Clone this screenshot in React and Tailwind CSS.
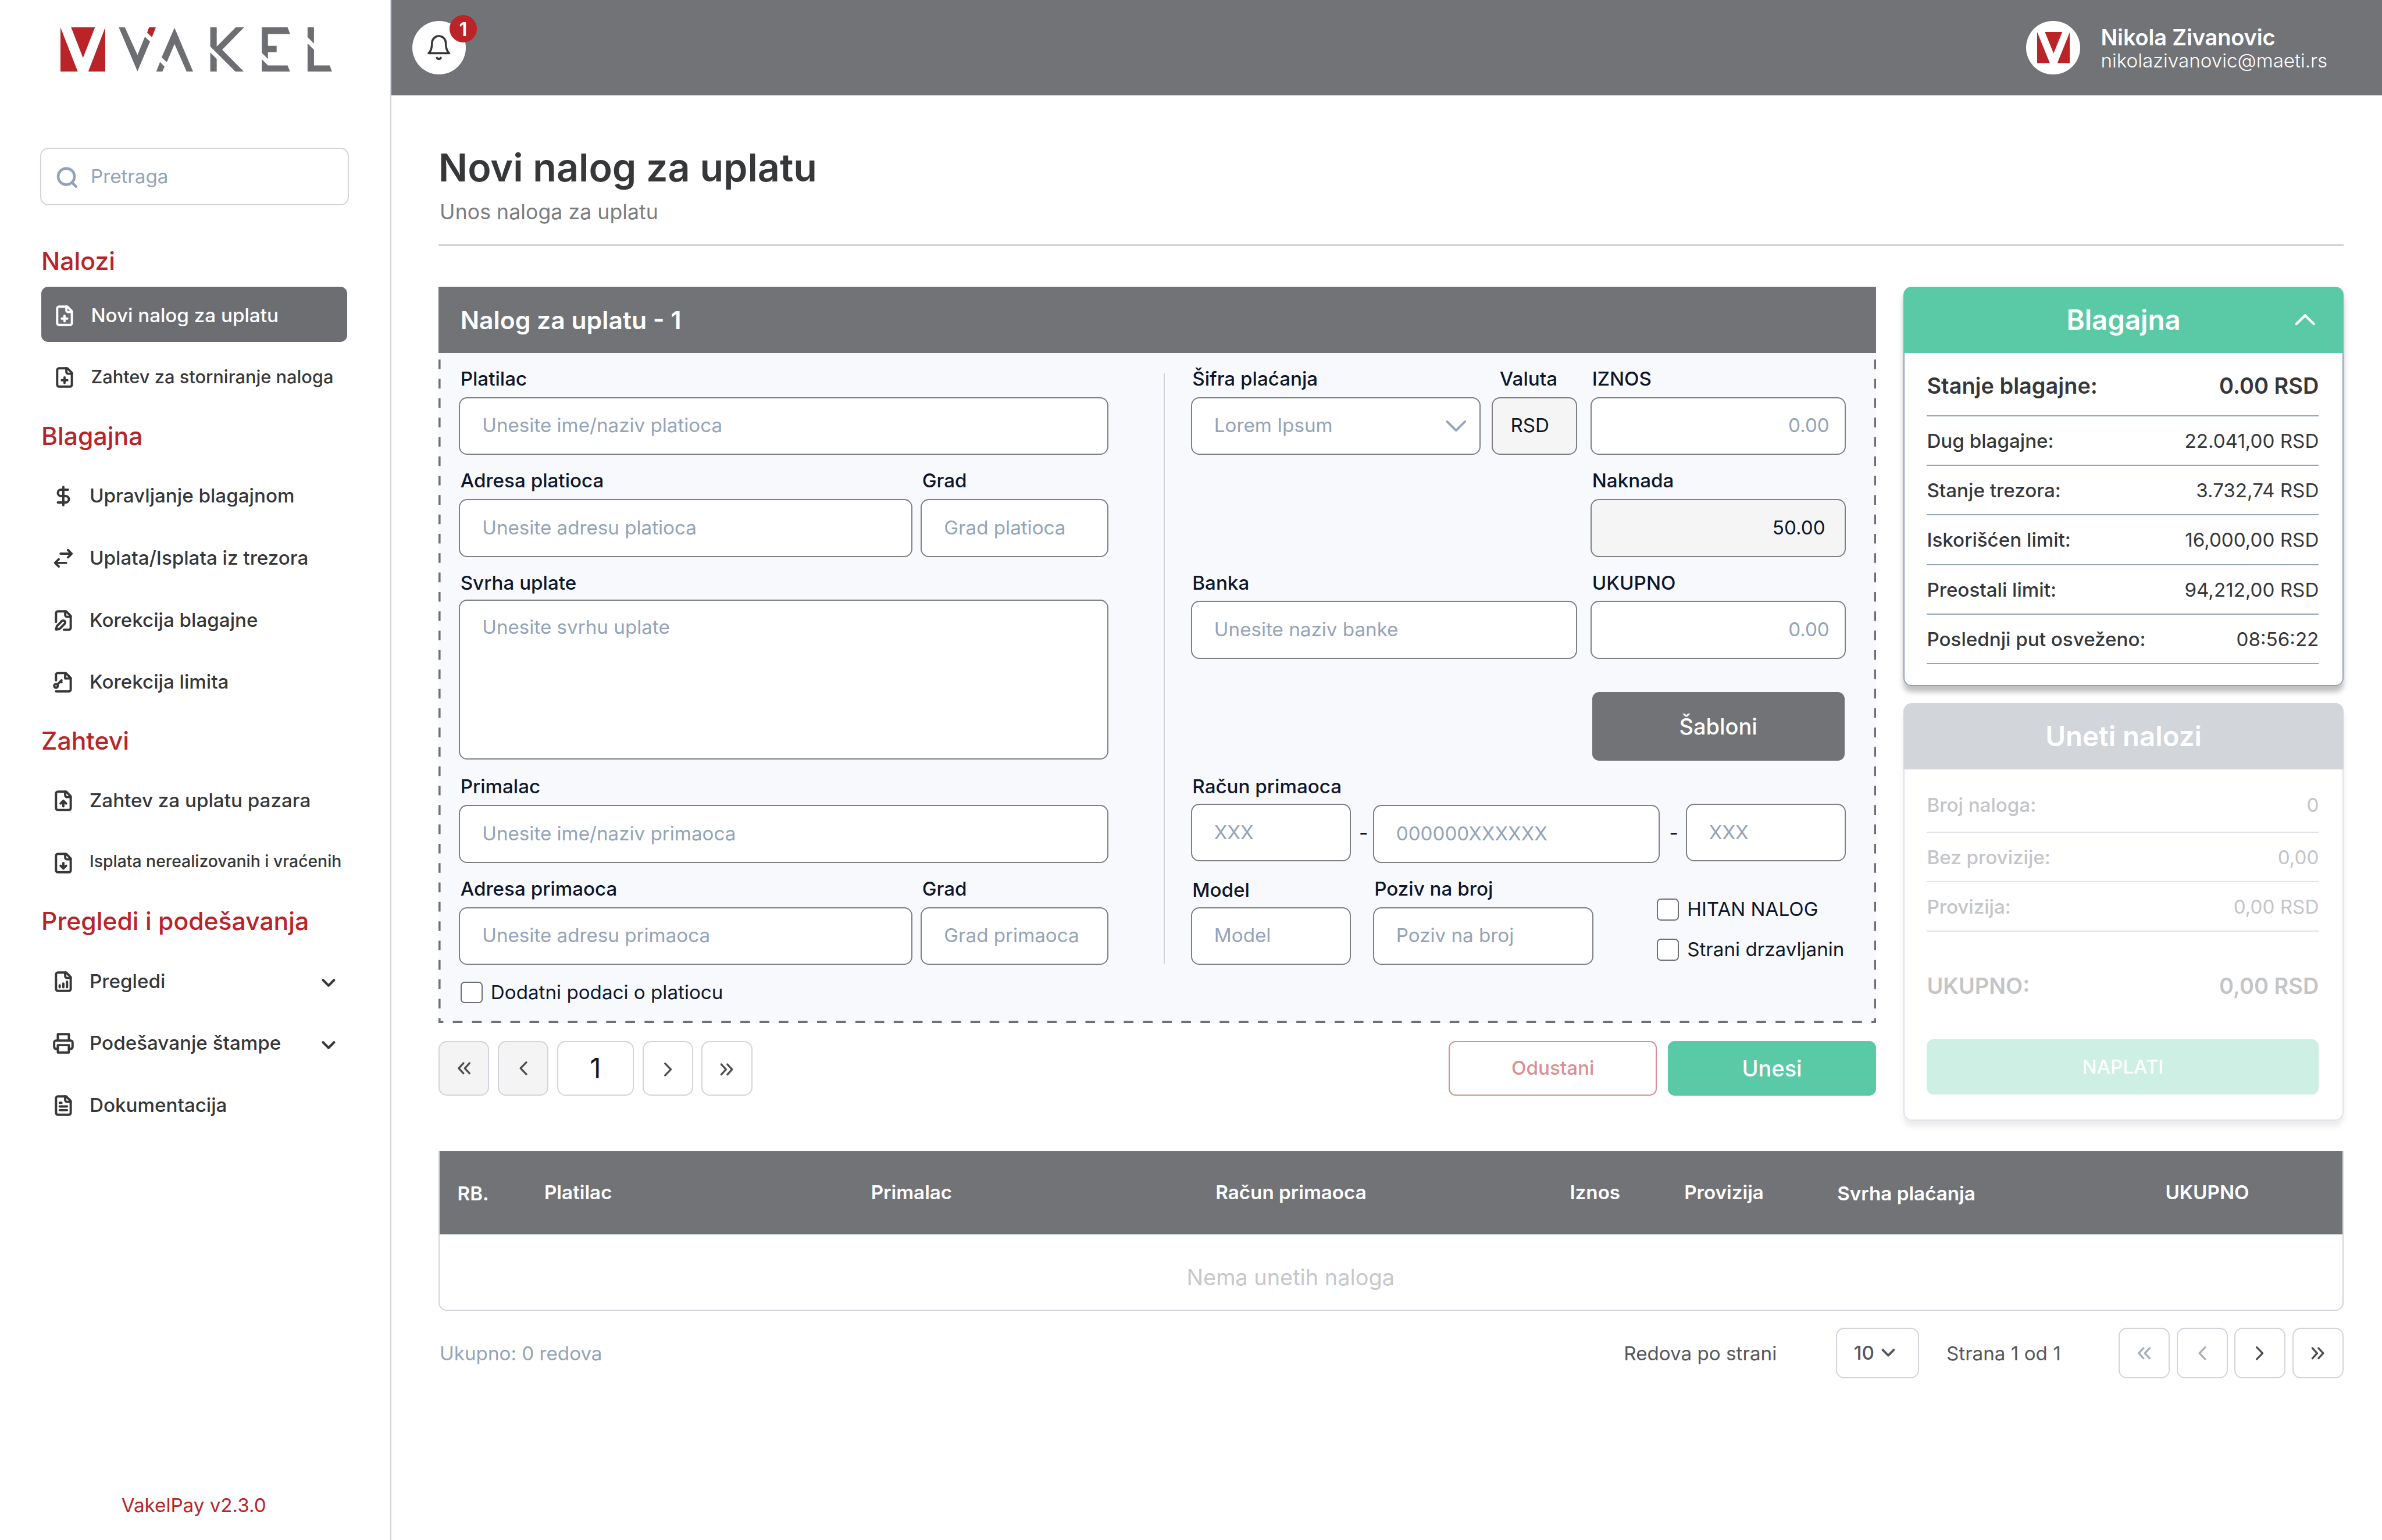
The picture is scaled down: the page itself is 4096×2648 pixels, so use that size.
import clsx from 'clsx';
import { ChevronDown } from 'lucide-react';

const FILE = (
    <>
        <path d="M15 2H6a2 2 0 0 0-2 2v16a2 2 0 0 0 2 2h12a2 2 0 0 0 2-2V7Z" />
        <path d="M14 2v4a2 2 0 0 0 2 2h4" />
    </>
);

const ICONS = {
    filePlus: <>{FILE}<path d="M9 15h6M12 18v-6" /></>,
    fileUp: <>{FILE}<path d="M12 12v6M15 15l-3-3-3 3" /></>,
    fileDown: <>{FILE}<path d="M12 18v-6M9 15l3 3 3-3" /></>,
    fileChart: <>{FILE}<path d="M8 18v-2M12 18v-4M16 18v-6" /></>,
    fileText: <>{FILE}<path d="M10 9H8M16 13H8M16 17H8" /></>,
    filePen: (
        <>
            <path d="M12.5 22H18a2 2 0 0 0 2-2V7l-5-5H6a2 2 0 0 0-2 2v9.5" />
            <path d="M14 2v4a2 2 0 0 0 2 2h4" />
            <path d="M13.378 15.626a1 1 0 1 0-3.004-3.004l-5.01 5.012a2 2 0 0 0-.506.854l-.837 2.87a.5.5 0 0 0 .62.62l2.87-.837a2 2 0 0 0 .854-.506z" />
        </>
    ),
    fileKey: (
        <>
            <path d="M4 10V4a2 2 0 0 1 2-2h8.5L20 7.5V20a2 2 0 0 1-2 2H4" />
            <path d="M14 2v6h6M10 10l-4.5 4.5M9 11l1 1" />
            <circle cx="4" cy="16" r="2" />
        </>
    ),
    dollar: <path d="M12 2v20M17 5H9.5a3.5 3.5 0 0 0 0 7h5a3.5 3.5 0 0 1 0 7H6" />,
    swap: <path d="M17 3l4 4-4 4M21 7H9M7 21l-4-4 4-4M3 17h12" />,
    printer: (
        <>
            <path d="M6 18H4a2 2 0 0 1-2-2v-5a2 2 0 0 1 2-2h16a2 2 0 0 1 2 2v5a2 2 0 0 1-2 2h-2" />
            <path d="M6 9V2h12v7M6 14h12v8H6z" />
        </>
    ),
};

const MENU = [
    {
        title: 'Blagajna',
        items: [
            { icon: 'dollar', label: 'Upravljanje blagajnom' },
            { icon: 'swap', label: 'Uplata/Isplata iz trezora' },
            { icon: 'filePen', label: 'Korekcija blagajne' },
            { icon: 'fileKey', label: 'Korekcija limita' },
        ],
    },
    {
        title: 'Zahtevi',
        items: [
            { icon: 'fileUp', label: 'Zahtev za uplatu pazara' },
            { icon: 'fileDown', label: 'Isplata nerealizovanih i vraćenih', small: true },
        ],
    },
    {
        title: 'Pregledi i podešavanja',
        items: [
            { icon: 'fileChart', label: 'Pregledi', expandable: true },
            { icon: 'printer', label: 'Podešavanje štampe', expandable: true },
            { icon: 'fileText', label: 'Dokumentacija' },
        ],
    },
];

const BALANCE = [
    ['Dug blagajne:', '22.041,00 RSD'],
    ['Stanje trezora:', '3.732,74 RSD'],
    ['Iskorišćen limit:', '16,000,00 RSD'],
    ['Preostali limit:', '94,212,00 RSD'],
    ['Poslednji put osveženo:', '08:56:22'],
];

function MenuIcon({ name }) {
    return (
        <svg viewBox="0 0 24 24" className="w-4 h-4 shrink-0 overflow-visible" fill="none" stroke="currentColor" strokeWidth="2.5" strokeLinecap="round" strokeLinejoin="round">
            {ICONS[name]}
        </svg>
    );
}

function Mark({ className }) {
    return (
        <svg viewBox="188 110 139 179" preserveAspectRatio="none" className={className} fill="#BA2328">
            <path d="M188 110L242 289H188ZM327 110V289H274ZM221 110H295L258 233Z" />
        </svg>
    );
}

function Logo() {
    return (
        <svg viewBox="188 110 843 179" preserveAspectRatio="none" className="w-[197px] h-[32.3px]" fill="#6D6E72">
            <path fill="#BA2328" d="M188 110L242 289H188ZM327 110V289H274ZM221 110H295L258 233Z" />
            <path d="M369 110H388L427 221L450 148L466 167L427 287Z" />
            <path fill="#BA2328" d="M463 110H484L472 150L457 131Z" />
            <path d="M542 112L600 289H580L542 177L518 250L502 231ZM497 249L511 268L504 289H485Z" />
            <path d="M653 110H673V187L732 110H758L690 200L758 289H732L653 187ZM653 211L673 237V289H653Z" />
            <path d="M813 110H893L901 137H832V184H859V210H832V237L813 213ZM813 238L832 263H893L901 289H813Z" />
            <path d="M955 110H975V175L955 150ZM955 175L975 200V263H1024L1031 289H955Z" />
        </svg>
    );
}

function MenuTitle({ children }) {
    return <div className="h-[41px] pb-px pl-[30px] flex items-center text-[18px] font-medium text-[#BA2328]">{children}</div>;
}

function MenuItem({ icon, label, small, expandable }) {
    return (
        <div className="h-[45px] pl-[38px] pr-[37px] flex items-center gap-[11px] text-[#363739] whitespace-nowrap">
            <MenuIcon name={icon} />
            <span className={clsx('font-medium', small ? 'text-[11.95px] pb-[2px]' : 'text-[14px]')}>{label}</span>
            {expandable && <ChevronDown className="w-4 h-4 mt-[2px] ml-auto" strokeWidth={2.6} />}
        </div>
    );
}

function Sidebar() {
    return (
        <aside className="w-[284px] h-full border-r border-[#D1D5DB] flex flex-col shrink-0">
            <div className="pt-[19.8px] pl-[44px] h-[107px]">
                <Logo />
            </div>
            <div className="ml-[29px] w-[224px] h-[42px] border border-[#D1D5DB] rounded-[6px] flex items-center pl-[10.5px] gap-[9.5px] text-[14px] text-[#94A3B8] shrink-0">
                <svg viewBox="0 0 16 16" className="w-4 h-4 mt-px" fill="none" stroke="currentColor" strokeWidth="2" strokeLinecap="round">
                    <circle cx="7.6" cy="7.4" r="5.9" />
                    <path d="M12.2 12.2l2.4 2.4" />
                </svg>
                Pretraga
            </div>
            <div className="mt-5 pt-[0.4px]">
                <MenuTitle>Nalozi</MenuTitle>
            </div>
            <div className="mt-[-2.4px] ml-[30px] w-[222px] h-[40px] rounded-[5px] bg-[#6D6E72] text-white flex items-center pl-[9px] gap-[11px] text-[14px] font-medium shrink-0">
                <span className="pt-[2px]"><MenuIcon name="filePlus" /></span>
                <span className="pt-[2px]">Novi nalog za uplatu</span>
            </div>
            <div className="h-[48.5px] pt-[3.5px] pl-[39px] flex items-center gap-[11px] text-[13px] font-medium text-[#363739] shrink-0">
                <MenuIcon name="filePlus" />
                <span className="pb-[1.5px]">Zahtev za storniranje naloga</span>
            </div>
            {MENU.map((group) => (
                <div key={group.title}>
                    <MenuTitle>{group.title}</MenuTitle>
                    {group.items.map((item) => <MenuItem key={item.label} {...item} />)}
                </div>
            ))}
            <div className="mt-auto pb-[14.5px] pr-[2px] text-center text-[14px] text-[#BA2328]">VakelPay v2.3.0</div>
        </aside>
    );
}

function Header() {
    return (
        <header className="h-[69px] bg-[#727377] flex items-center justify-between pl-[15px] pr-[37px] shrink-0">
            <div className="relative w-[39px] h-[39px] rounded-full bg-white flex items-center justify-center text-[#363739]">
                <svg viewBox="0 0 24 24" className="w-5 h-5" fill="none" stroke="currentColor" strokeWidth="1.8" strokeLinecap="round" strokeLinejoin="round">
                    <path d="M6 8a6 6 0 0 1 12 0c0 7 3 9 3 9H3s3-2 3-9" />
                    <path d="M10.3 21a1.94 1.94 0 0 0 3.4 0" />
                </svg>
                <span className="absolute -top-1 left-[27px] w-5 h-5 rounded-full bg-[#BA2328] text-white text-[14px] font-semibold leading-[20.5px] text-center">1</span>
            </div>
            <div className="flex items-center gap-[15px] text-white">
                <div className="w-[39px] h-[39px] rounded-full bg-white flex items-center justify-center">
                    <Mark className="w-[23.7px] h-[22.6px]" />
                </div>
                <div className="w-[167px] pt-[2px] whitespace-nowrap">
                    <p className="text-[16px] leading-[17px] font-semibold tracking-[-0.05px]">Nikola Zivanovic</p>
                    <p className="text-[14px] leading-[17px] font-light">nikolazivanovic@maeti.rs</p>
                </div>
            </div>
        </header>
    );
}

function Label({ children, className }) {
    return <div className={clsx('h-[26px] pl-px flex items-center text-[14px] font-medium text-[#0F172A] whitespace-nowrap', className)}>{children}</div>;
}

function Box({ children, className }) {
    return (
        <div className={clsx('border border-[#7F8082] rounded-[6px] text-[14px] flex whitespace-nowrap', className)}>
            {children}
        </div>
    );
}

function Field({ label, value, className, labelClass, boxClass = 'bg-white text-[#94A3B8] px-4' }) {
    return (
        <div className={clsx('shrink-0', className)}>
            <Label className={labelClass}>{label}</Label>
            <Box className={clsx('h-[42px] items-center', boxClass)}>{value}</Box>
        </div>
    );
}

function Check({ label }) {
    return (
        <div className="flex items-center gap-[6px] h-4 text-[14px] text-[#0F172A] whitespace-nowrap">
            <span className="w-4 h-4 border border-[#6D6E72] rounded-[3px] bg-white" />
            {label}
        </div>
    );
}

// Dashed outline: 7px dashes with a half dash in every corner
function DashedOutline() {
    return (
        <svg viewBox="0 0 1043 486" className="absolute inset-0 w-full h-full pointer-events-none" fill="none" stroke="#6D6E72" strokeWidth="1.5">
            <path d="M.75 0V486M1042.25 0V486" strokeDasharray="7 7.053" strokeDashoffset="51.5" />
            <path d="M0 485.25H1043" strokeDasharray="7 6.907" strokeDashoffset="3.5" />
        </svg>
    );
}

function OrderForm() {
    return (
        <section className="w-[1043px]">
            <h2 className="h-[48px] bg-[#727377] text-white text-[18px] font-semibold flex items-center pt-px pl-4">Nalog za uplatu - 1</h2>
            <div className="relative h-[486px] bg-[#F8F9FD] flex pl-[15px] pt-[6px]">
                <DashedOutline />
                <div className="w-[471px] flex flex-col gap-[6px]">
                    <Field label="Platilac" value="Unesite ime/naziv platioca" />
                    <div className="flex gap-[6px]">
                        <Field className="w-[329px]" label="Adresa platioca" value="Unesite adresu platioca" />
                        <Field className="w-[136px]" label="Grad" value="Grad platioca" />
                    </div>
                    <div>
                        <Label>Svrha uplate</Label>
                        <Box className="-mt-px h-[116px] bg-white text-[#94A3B8] px-4 pt-[9px]">Unesite svrhu uplate</Box>
                    </div>
                    <Field className="mt-px" label="Primalac" value="Unesite ime/naziv primaoca" />
                    <div className="flex gap-[6px]">
                        <Field className="w-[329px]" label="Adresa primaoca" value="Unesite adresu primaoca" />
                        <Field className="w-[136px]" label="Grad" value="Grad primaoca" />
                    </div>
                    <div className="mt-[6px] pl-px">
                        <Check label="Dodatni podaci o platiocu" />
                    </div>
                </div>

                <div className="ml-[40px] mr-[19px] mt-[9px] w-px h-[428px] bg-[#D1D5DB]" />

                <div className="w-[475px] flex flex-col gap-[6px]">
                    <div className="flex">
                        <Field
                            className="w-[210px]"
                            label="Šifra plaćanja"
                            boxClass="bg-white text-[#94A3B8] pl-4 pr-[9.5px] justify-between"
                            value={
                                <>
                                    Lorem Ipsum
                                    <svg viewBox="0 0 15 8" className="w-[15px] h-2" fill="none" stroke="currentColor" strokeWidth="1.6" strokeLinecap="round" strokeLinejoin="round">
                                        <path d="M1 .8l6.5 6.4L14 .8" />
                                    </svg>
                                </>
                            }
                        />
                        <Field className="ml-2 w-[62px]" label="Valuta" labelClass="ml-[5px]" value="RSD" boxClass="bg-[#F5F5F5] text-[#0F172A] pl-[13px]" />
                        <Field className="ml-[10px] w-[185px]" label="IZNOS" value="0.00" boxClass="bg-white text-[#94A3B8] justify-end pr-[11px]" />
                    </div>
                    <Field className="w-[185px] self-end" label="Naknada" value="50.00" boxClass="bg-[#F5F5F5] text-[#0F172A] justify-end pr-[14px]" />
                    <div className="flex gap-[10px]">
                        <Field className="w-[280px]" label="Banka" value="Unesite naziv banke" />
                        <Field className="w-[185px]" label="UKUPNO" value="0.00" boxClass="bg-white text-[#94A3B8] justify-end pr-[11px]" />
                    </div>
                    <button className="mt-[18px] mr-px w-[183px] h-[50px] self-end rounded-[5px] bg-[#727377] text-white text-[16px] font-medium">Šabloni</button>
                    <div className="h-[68px]">
                        <Label>Račun primaoca</Label>
                        <div className="flex text-[14px] text-[#0F172A]">
                            <Box className="-mt-px w-[116px] h-[42px] items-center bg-white text-[#94A3B8] pl-4">XXX</Box>
                            <span className="w-4 pl-[6px] pt-[10px] font-medium">-</span>
                            <Box className="w-[208px] h-[42px] items-center bg-white text-[#94A3B8] pl-4">000000XXXXXX</Box>
                            <span className="w-[19px] pl-[7px] pt-[10px] font-medium">-</span>
                            <Box className="-mt-px w-[116px] h-[42px] items-center bg-white text-[#94A3B8] pl-4">XXX</Box>
                        </div>
                    </div>
                    <div className="flex">
                        <Field className="w-[116px]" label="Model" labelClass="pt-[2px]" value="Model" />
                        <Field className="ml-4 w-[160px]" label="Poziv na broj" value="Poziv na broj" />
                        <div className="ml-[46px] pt-[20px] flex flex-col gap-[13px]">
                            <Check label="HITAN NALOG" />
                            <Check label="Strani drzavljanin" />
                        </div>
                    </div>
                </div>
            </div>
            <FormActions />
        </section>
    );
}

function Arrow({ dir, double }) {
    return (
        <svg
            viewBox="0 0 10 10"
            className={clsx('w-[10px] h-[10px] overflow-visible', dir === 'right' && 'rotate-180')}
            fill="none"
            stroke="currentColor"
            strokeWidth="1.4"
            strokeLinecap="round"
            strokeLinejoin="round"
        >
            {double ? <path d="M4.6 1.3L1.2 5l3.4 3.7M9 1.3L5.6 5 9 8.7" /> : <path d="M7.2.7L3 5l4.2 4.3" />}
        </svg>
    );
}

function PageButton({ dir, double, className }) {
    return (
        <button className={clsx('w-[37px] border border-[#D1D5DB] rounded-[6px] flex items-center justify-center', className)}>
            <Arrow dir={dir} double={double} />
        </button>
    );
}

function FormActions() {
    return (
        <div className="mt-[13px] h-[40px] flex gap-[6px] text-[#4B4D51]">
            <PageButton dir="left" double className="h-[40px] bg-[#F4F4F5]" />
            <PageButton dir="left" className="h-[40px] bg-[#F4F4F5]" />
            <div className="w-[56px] h-[40px] border border-[#D1D5DB] rounded-[6px] flex items-center justify-center text-[20px] text-[#0F172A]">1</div>
            <PageButton dir="right" className="h-[40px] pt-[1.5px]" />
            <PageButton dir="right" double className="h-[40px] pt-[1.5px]" />
            <button className="ml-auto w-[151px] h-[40px] border border-[#D98F92] rounded-[5px] text-[14px] font-medium text-[#DA8F92]">Odustani</button>
            <button className="ml-[2px] w-[151px] h-[40px] rounded-[5px] bg-[#5ACAA6] text-white text-[16px] font-medium">Unesi</button>
        </div>
    );
}

function BalanceCard() {
    return (
        <div className="h-[290px] rounded-[6px] shadow-[0_4px_4px_rgba(0,0,0,0.25)] text-[#363739]">
            <div className="relative h-[48px] rounded-t-[6px] bg-[#5ACAA6] text-white text-[20px] font-semibold flex items-center justify-center">
                Blagajna
                <svg viewBox="0 0 15 8" className="absolute right-[20.5px] top-5 w-[15px] h-2 overflow-visible" fill="none" stroke="currentColor" strokeWidth="1.8" strokeLinecap="round" strokeLinejoin="round">
                    <path d="M1.2 7.2L7.5 1l6.3 6.2" />
                </svg>
            </div>
            <div className="h-[242px] border border-t-0 border-[#94A3B8] rounded-b-[6px] bg-white pl-4 pr-[17px]">
                <div className="h-[46px] pt-[3px] border-b border-[#94A3B8] flex items-center justify-between text-[16px] font-semibold">
                    <span>Stanje blagajne:</span>
                    <span>0.00 RSD</span>
                </div>
                {BALANCE.map(([label, value]) => (
                    <div key={label} className="h-[36px] pt-px border-b border-[#94A3B8] flex items-center justify-between text-[14px]">
                        <span className="font-medium">{label}</span>
                        <span>{value}</span>
                    </div>
                ))}
            </div>
        </div>
    );
}

function TotalsCard() {
    return (
        <div className="mt-3 h-[303px] rounded-[6px] shadow-[0_4px_4px_rgba(0,0,0,0.08)] text-[#C4C5C7] text-[14px]">
            <div className="h-[48px] rounded-t-[6px] bg-[#D2D5DA] text-white text-[20px] font-semibold flex items-center justify-center">Uneti nalozi</div>
            <div className="h-[255px] border border-t-0 border-[#DFE3EA] rounded-b-[6px] bg-white pl-4 pr-[17px]">
                <div className="h-[46px] pt-[7px] border-b border-[#DFE3E8] flex items-center justify-between">
                    <span className="font-medium">Broj naloga:</span>
                    <span>0</span>
                </div>
                <div className="h-[36px] pt-px border-b border-[#DFE3E8] flex items-center justify-between">
                    <span className="font-medium">Bez provizije:</span>
                    <span>0,00</span>
                </div>
                <div className="h-[36px] pt-px border-b border-[#DFE3E8] flex items-center justify-between">
                    <span className="font-medium">Provizija:</span>
                    <span>0,00 RSD</span>
                </div>
                <div className="h-[78px] pt-px flex items-center justify-between text-[16px] font-semibold">
                    <span>UKUPNO:</span>
                    <span>0,00 RSD</span>
                </div>
                <button className="w-full h-[40px] rounded-[5px] bg-[#CDEFE4] text-white font-medium">NAPLATI</button>
            </div>
        </div>
    );
}

function OrdersTable() {
    return (
        <div className="mt-[22px] h-[116px] border border-t-0 border-[#D1D5DB] rounded-[6px] rounded-t-none">
            <div className="h-[61px] border-b border-[#D1D5DB] bg-[#727377] text-white text-[14px] font-semibold grid grid-cols-[63px_237px_250px_257px_83px_111px_238px_1fr] items-center pl-[13px] whitespace-nowrap">
                <span className="pt-[2px]">RB.</span>
                <span>Platilac</span>
                <span>Primalac</span>
                <span>Račun primaoca</span>
                <span>Iznos</span>
                <span>Provizija</span>
                <span className="pt-[2px]">Svrha plaćanja</span>
                <span>UKUPNO</span>
            </div>
            <div className="h-[54px] pt-[7px] pl-[542px] flex items-center text-[16px] text-[#C6C8CB]">Nema unetih naloga</div>
        </div>
    );
}

function TableFooter() {
    return (
        <div className="mt-3 h-[37px] flex items-center text-[14px] text-[#55575B] whitespace-nowrap">
            <span className="pl-px pt-px text-[#94A3B8]">Ukupno: 0 redova</span>
            <span className="ml-auto pt-px w-[154px]">Redova po strani</span>
            <div className="w-[60px] h-[37px] border border-[#D1D5DB] rounded-[6px] flex items-center pl-3 gap-[2px] font-medium">
                10
                <ChevronDown className="w-4 h-4" strokeWidth={2.5} />
            </div>
            <span className="ml-5 pt-px w-[125px]">Strana 1 od 1</span>
            <div className="flex gap-[5px] text-[#A7ADB8]">
                <PageButton dir="left" double className="h-[37px]" />
                <PageButton dir="left" className="h-[37px]" />
                <PageButton dir="right" className="h-[37px] text-[#4B4D51]" />
                <PageButton dir="right" double className="h-[37px] text-[#4B4D51]" />
            </div>
        </div>
    );
}

export default function App() {
    return (
        <div className="[zoom:2.37037] w-[1728px] h-[1117.1px] overflow-hidden bg-white flex font-['Inter',sans-serif]">
            <Sidebar />
            <div className="flex-1 flex flex-col">
                <Header />
                <main className="pl-[34px] pr-[28px]">
                    <h1 className="mt-[32px] h-[42px] leading-[42px] text-[28px] font-semibold text-[#363739]">Novi nalog za uplatu</h1>
                    <p className="h-[34px] pl-px leading-[22px] text-[15px] text-[#7B7C80] tracking-[0.04px]">Unos naloga za uplatu</p>
                    <div className="h-[1.5px] bg-[#D1D5DB]" />
                    <div className="mt-[29.5px] flex justify-between">
                        <OrderForm />
                        <div className="w-[319px]">
                            <BalanceCard />
                            <TotalsCard />
                        </div>
                    </div>
                    <OrdersTable />
                    <TableFooter />
                </main>
            </div>
        </div>
    );
}
